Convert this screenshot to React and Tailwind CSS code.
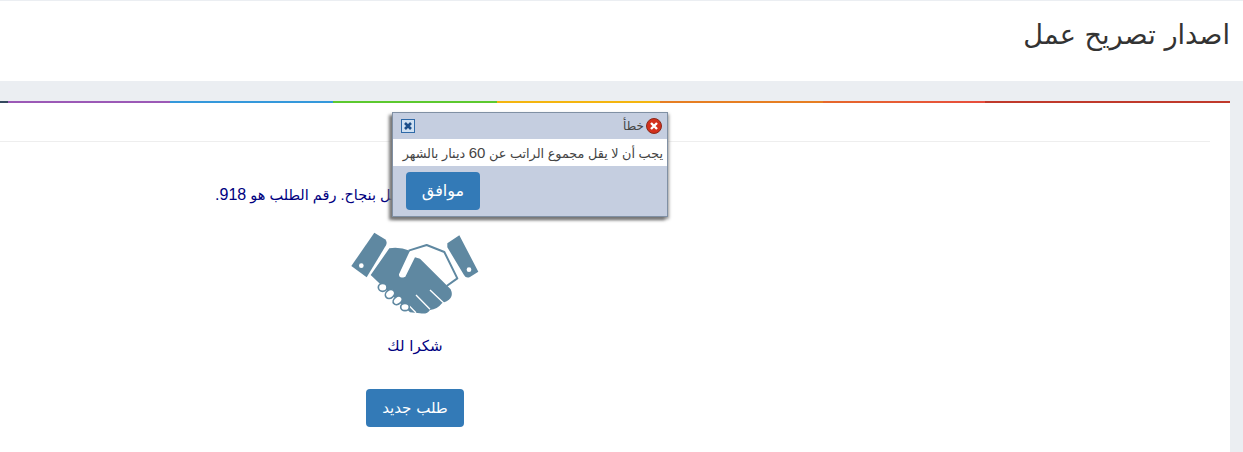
export default function App() {
  return (
    <div dir="rtl" className="relative h-[452px] w-full overflow-hidden bg-[#ebeef2] font-['DejaVu_Sans',sans-serif]">
      <div className="mt-px flex h-[80px] items-center bg-white pr-[13px]">
        <h1 className="text-[27.2px] font-normal leading-[33px] text-[#333333] translate-y-[-7px]">اصدار تصريح عمل</h1>
      </div>
      <div className="pt-[20px] pl-0 pr-[13px]">
        <div dir="ltr" className="flex h-[2px]">
          <div className="w-[8px] bg-[#34495e]"></div>
          <div className="w-[162px] bg-[#9b59b6]"></div>
          <div className="w-[163px] bg-[#3498db]"></div>
          <div className="w-[164px] bg-[#5cc92f]"></div>
          <div className="w-[163px] bg-[#f4b50f]"></div>
          <div className="w-[163px] bg-[#e67e22]"></div>
          <div className="w-[162px] bg-gradient-to-r from-[#e6682a] to-[#e74c3c]"></div>
          <div className="flex-1 bg-[#c0392b]"></div>
        </div>
        <div className="h-[349px] bg-white pr-[20px]">
          <div className="h-[39px] border-b border-[#eeeeee]"></div>
          <div className="mr-[390px] flex w-[810px] flex-col items-center">
            <p className="mt-[43px] font-['Liberation_Sans','DejaVu_Sans',sans-serif] text-[14.5px] leading-[20px] text-[#000080] whitespace-nowrap">لقد تم تقديم طلبك لإصدار تصريح العمل بنجاح. رقم الطلب هو <span className="text-[16px]">918.</span></p>
            <svg viewBox="0 0 170 110" className="mt-[15px] h-[110px] w-[170px]">
              <g transform="scale(0.3333)">
                <path d="M133 38 L165 58 Q173 65 168 76 L110 172 L64 138 Z" fill="#5f88a1" />
                <circle cx="94" cy="137" r="7" fill="#ffffff" />
                <path d="M352 70 L388 46 L445 155 L420 171 Q408 176 402 165 L352 82 Z" fill="#5f88a1" />
                <circle cx="417" cy="149" r="7" fill="#ffffff" />
                <path d="M236 92 L290 75 L343 96 L382 175 L350 198" fill="none" stroke="#5f88a1" strokeWidth="6" strokeLinejoin="round" />
                <path d="M178 85 Q208 80 240 92 L207 163 Q207 178 226 170 L255 112 L270 116 L362 208 Q373 232 350 244 L336 250 Q322 268 300 270 Q292 284 270 280 L240 277 L122 165 Z" fill="#5f88a1" />
                <path d="M258 225 L300 268 M300 210 L342 250 M238 258 L258 278" stroke="#ffffff" strokeWidth="4" fill="none" />
                <g fill="#ffffff" stroke="#5f88a1" strokeWidth="5">
                  <ellipse cx="158" cy="202" rx="13" ry="12" />
                  <ellipse cx="180" cy="222" rx="15" ry="12" transform="rotate(-40 180 222)" />
                  <ellipse cx="203" cy="241" rx="15" ry="11" transform="rotate(-40 203 241)" />
                  <ellipse cx="225" cy="261" rx="13" ry="11" />
                </g>
              </g>
            </svg>
            <p className="mt-[6px] text-[15px] leading-[20px] text-[#000080]">شكرا لك</p>
            <button className="mt-[33px] h-[38px] w-[98px] rounded-[4px] bg-[#337ab7] text-[15px] text-white">طلب جديد</button>
          </div>
        </div>
      </div>

      <div className="absolute left-[392px] top-[112px] h-[105px] w-[276px] border border-[#8090a4] bg-[#c5cee0] shadow-[-3px_3px_3px_#777,1px_2px_3px_#999]">
        <div className="flex h-[26px] items-center justify-between pl-[8px] pr-[5px]">
          <div className="flex items-center gap-[2px]">
            <svg width="16" height="16" viewBox="0 0 16 16">
              <circle cx="8" cy="8" r="7.5" fill="#d3301c" stroke="#8a2a1c" />
              <path d="M5 5 L11 11 M11 5 L5 11" stroke="#ffffff" strokeWidth="2.4" />
            </svg>
            <span className="text-[12px] leading-none text-[#444444]">خطأ</span>
          </div>
          <svg width="14" height="14" viewBox="0 0 14 14">
            <rect x="0.5" y="0.5" width="13" height="13" fill="#cfe0f2" stroke="#2f6aa8" />
            <path d="M4 4 L10 10 M10 4 L4 10" stroke="#1d4f8a" strokeWidth="2.6" />
          </svg>
        </div>
        <div className="flex h-[27px] items-center bg-white pr-[4px] font-['Liberation_Sans','DejaVu_Sans',sans-serif] text-[12.8px] leading-none text-[#444444] whitespace-pre">
          <span>يجب أن لا يقل مجموع الراتب عن <span className="text-[15px]">60</span> دينار بالشهر</span>
        </div>
        <div dir="ltr" className="pl-[13px] pt-[6px]">
          <button className="h-[38px] w-[74px] rounded-[4px] bg-[#337ab7] text-[16px] text-white">موافق</button>
        </div>
      </div>
    </div>
  );
}
